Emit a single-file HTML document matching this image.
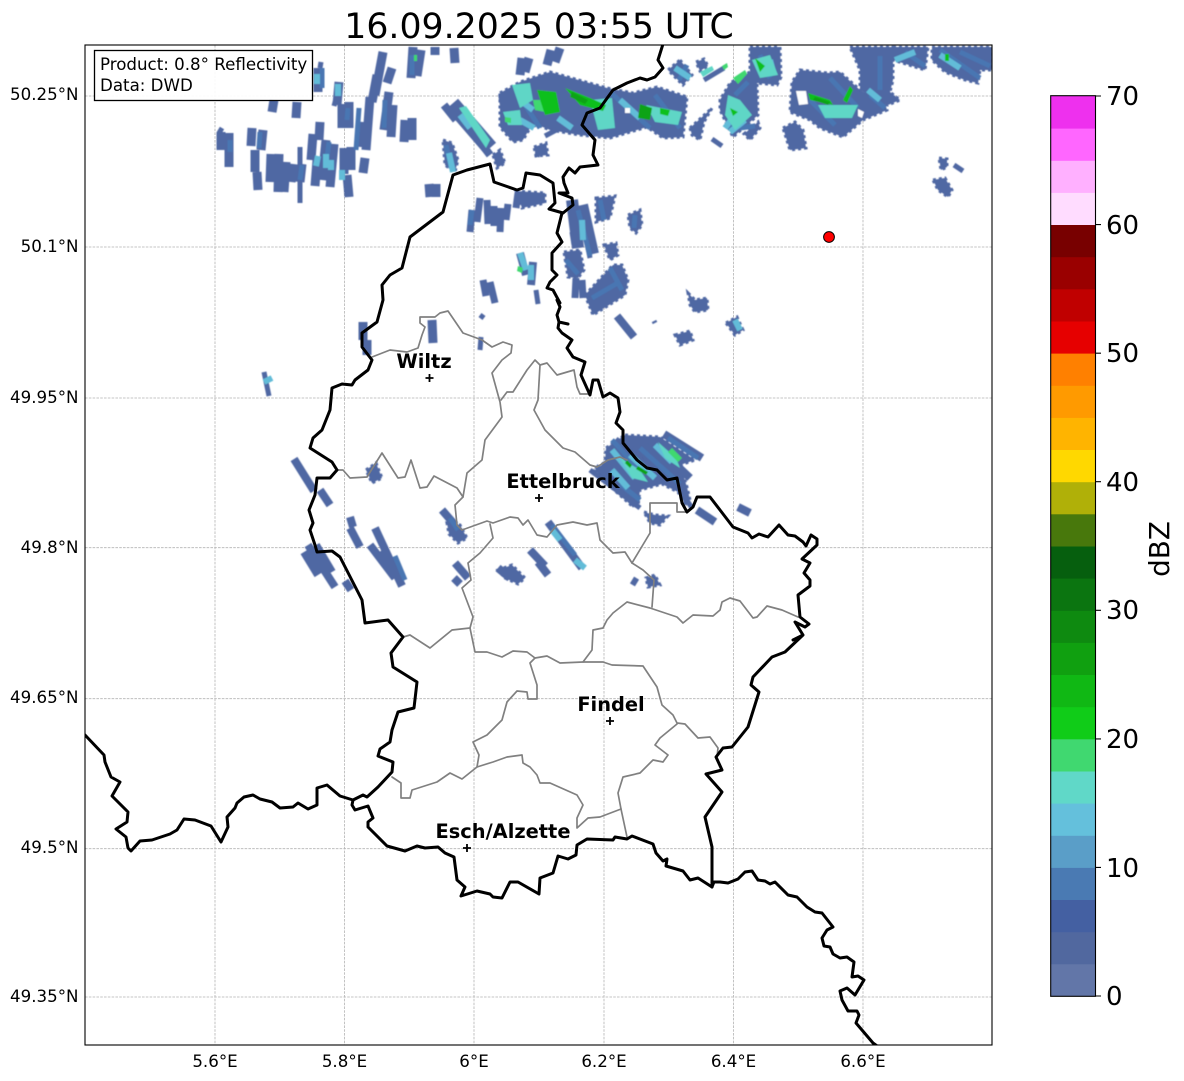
<!DOCTYPE html>
<html><head><meta charset="utf-8"><title>Radar</title>
<style>
html,body{margin:0;padding:0;background:#fff;width:1184px;height:1081px;overflow:hidden}
svg{display:block}
text{font-family:"DejaVu Sans","Liberation Sans",sans-serif;fill:#000}
.b{fill:#4f67a3;stroke:#4f67a3;stroke-width:3;stroke-dasharray:3 3}
.s{fill:none;stroke-linecap:butt}
.c{fill:none;stroke:#000;stroke-width:3;stroke-linejoin:round;stroke-linecap:round}
.g{fill:none;stroke:#808080;stroke-width:1.7;stroke-linejoin:round;stroke-linecap:round}
.t{font-size:16.67px}
.cb{font-size:26px}
.city{font-size:19.4px;font-weight:bold;text-anchor:middle}
</style></head><body>
<svg width="1184" height="1081" viewBox="0 0 1184 1081" xmlns="http://www.w3.org/2000/svg">
<defs><clipPath id="ax"><rect x="85" y="45" width="907" height="1000"/></clipPath>
<filter id="soft" x="-2%" y="-2%" width="104%" height="104%"><feGaussianBlur stdDeviation="0.55"/></filter></defs>
<text x="539" y="38" font-size="34.7" text-anchor="middle">16.09.2025 03:55 UTC</text>

<!-- grid -->
<g stroke="#b4b4b4" stroke-width=".8" stroke-dasharray="2.6 1.2" fill="none">
<path d="M215 45V1045M344.5 45V1045M474 45V1045M604 45V1045M733.5 45V1045M863 45V1045"/>
<path d="M85 96H992M85 247H992M85 398H992M85 547.7H992M85 698.7H992M85 848.7H992M85 997H992"/>
</g>

<g clip-path="url(#ax)">
<g filter="url(#soft)">
<!-- radar: base polygons -->
<g class="b">
<polygon points="500,93 520,82 550,72 607,88 633,93 657,87 687,97 683,137 663,138 647,127 610,138 580,135 550,130 533,123 523,140 513,142 500,127"/>
<polygon points="680,60 692,75 683,85 668,70"/>
<polygon points="696,62 704,59 708,66 700,71"/>
<polygon points="750,47 780,47 781,77 777,85 757,83 758,115 733,137 720,110 720,100 730,83 750,72"/>
<polygon points="690,128 712,108 704,122 700,140 692,135"/>
<polygon points="744,134 758,122 760,128 750,140"/>
<polygon points="800,70 828,73 840,72 860,90 885,103 887,110 863,120 843,137 820,128 810,120 790,112 792,82"/>
<polygon points="783,128 795,122 803,130 806,148 790,150"/>
<polygon points="850,47 893,47 893,80 890,92 900,100 888,105 860,90 860,70"/>
<polygon points="893,47 928,47 925,70 893,60"/>
<polygon points="932,47 992,47 992,70 980,70 978,83 965,80 945,72 932,60"/>
<polygon points="939,158 947,159 947,167 941,170"/>
<polygon points="933,180 945,178 952,190 948,197 938,190"/>
<polygon points="585,295 613,265 622,265 628,280 625,295 593,315"/>
<polygon points="564,252 580,250 584,270 578,278 568,277"/>
<polygon points="596,198 615,196 610,218 596,222"/>
<polygon points="628,215 640,210 642,225 636,233 630,228"/>
<polygon points="604,245 616,243 618,255 610,260"/>
<polygon points="688,293 695,300 707,298 708,310 695,312 690,305"/>
<polygon points="675,335 690,331 693,340 680,345"/>
<polygon points="726,323 737,317 743,330 735,335"/>
<polygon points="516,191 545,193 545,203 522,208"/>
<polygon points="498,570 512,565 525,578 518,584 505,578"/>
<polygon points="646,578 655,575 660,585 648,587"/>
<polygon points="644,512 655,515 668,516 660,525 650,523"/>
<polygon points="366,470 376,463 382,478 372,483"/>
<polygon points="443,140 452,143 458,160 455,172 445,165"/>
<polygon points="493,155 500,150 505,163 497,168"/>
<polygon points="534,147 546,143 548,155 536,156"/>
<polygon points="447,523 460,525 467,538 458,543 449,534"/>
<polygon points="625,435 660,437 695,460 680,465 687,487 690,500 686,506 678,492 662,484 640,490 638,506 632,506 612,488 595,470 605,462 606,448"/>
</g>
<!-- radar: strips -->
<g class="s" stroke="#4f67a3">
<path stroke-width="9" d="M221 132L221 150M229 133L229 153M229 150L229 167M252 128L251 146M263 130L261 150M255 150L255 172M257 172L258 190M271 154L270 182M279 154L278 192M286 162L284 192M293 164L291 182M302 164L300 182M313 134L311 160M320 122L319 140M317 160L315 186M326 140L322 180M334 144L330 187M344 148L344 174M347 175L349 197M351 147L351 170M365 158L363 173M363 122L361 147M370 97L366 150M377 75L372 102M383 52L375 95M392 68L387 83M389 92L384 130M393 105L391 137M405 120L404 142M412 118L412 140M413 47L411 78M421 50L417 76M435 47L435 55M454 48L455 63M342 104L342 128M349 102L349 128M318 68L318 92M339 82L337 105M274 100L272 112M297 102L296 118M432 320L433 343M429 184L430 197M436 184L436 197M363 322L363 340M367 340L367 355M522 58L520 75M529 58L525 72M551 50L547 65M560 48L555 62"/>
<path stroke-width="5" d="M300 147L300 203M222 128L219 133M321 62L320 68M340 84L334 106M264 372L269 396M536 290L538 304M481 337L480 350M574 202L577 212M572 232L574 245M588 248L590 258M538 150L537 157"/>
<path stroke-width="7" d="M472 210L470 232M480 198L477 222M487 200L488 224M494 206L494 226M501 208L500 232M508 204L506 220M518 193L516 208M483 280L486 296M490 282L495 303M576 278L575 298M582 280L583 298"/>
<path stroke-width="16" d="M452 104L490 148"/>
<path stroke-width="12" d="M504 94L510 128M524 88L530 128M515 110L512 136M582 205L593 254M572 200L578 248"/>
<path stroke-width="8" d="M462 118L490 155M444 105L456 120M520 253L526 275M533 262L531 285M617 316L634 337M294 459L314 491M320 490L330 505M350 528L360 547M350 517L353 527M375 528L402 586M370 545L395 578M382 550L400 572M308 545L335 587M316 545L332 572M304 552L318 575M345 581L351 590M442 510L455 525M455 563L468 578M454 578L460 584M530 550L545 566M538 562L548 575M548 522L582 568M632 580L637 583M498 568L510 578M697 510L715 522M738 507L750 513M610 448L632 480M603 468L636 505M615 440L650 470M635 445L675 482M650 440L690 478M664 434L702 458"/>
<path stroke-width="5" d="M712 139L722 146M704 80L724 68M575 120L545 136M654 321L655 323M680 490L692 508M596 466L612 480M590 470L640 508M954 165L963 171M480 315L484 318"/>
</g>
<!-- radar: mid blue -->
<g class="s" stroke="#4a76b2" stroke-width="5">
<path d="M230 140L230 152M260 132L259 148M329 142L326 166M359 108L356 150M385 100L384 128M412 55L412 75M348 108L347 120M322 68L322 88M302 165L300 180M578 210L590 256M600 200L604 220M635 215L634 228M610 268L622 290M592 298L616 284M566 260L578 274M470 225L472 210M446 145L451 168M522 100L540 128M610 92L650 128M655 95L680 128M760 55L770 78M735 95L748 82M745 115L730 130M880 56L880 90M905 52L925 66M940 50L980 78M960 52L990 66M830 78L858 108M810 100L835 125M870 95L885 108M687 65L679 80M740 128L755 126M612 440L640 470M640 448L680 484M668 438L698 458M620 484L640 500M552 525L575 555M450 518L458 530M395 556L405 580"/>
</g>
<!-- radar: cyan -->
<g class="s" stroke="#62bcd8" stroke-width="6">
<path d="M318 156L316 166M326 154L326 168M331 160L331 170M338 84L338 96M317 74L317 84M342 170L342 180M449 153L453 172M520 253L526 270M531 265L531 280M582 220L583 240M520 100L533 110M520 120L534 128M558 118L572 128M620 100L640 118M690 78L675 68M770 60L774 75M745 120L730 132M725 128L740 108M895 60L915 52M940 55L960 68M880 100L868 90M735 320L740 330M612 450L635 478M630 455L655 478M655 445L672 462M612 470L628 488M575 560L585 568M552 530L560 540M272 378L264 382M460 115L470 128"/>
</g>
<!-- radar: teal -->
<g fill="#5fd6c6" stroke="none">
<polygon points="512,85 530,83 533,100 520,108"/>
<polygon points="503,112 520,110 522,125 508,125"/>
<polygon points="590,100 612,98 615,128 598,130"/>
<polygon points="646,105 682,112 678,125 655,122"/>
<polygon points="818,105 858,105 852,118 825,118"/>
<polygon points="752,60 770,55 778,75 760,78"/>
<polygon points="728,95 740,100 752,115 735,130 725,115"/>
<polygon points="459,108 466,106 490,140 486,148"/>
<polygon points="700,72 712,66 714,70 703,77"/>
<polygon points="620,458 640,470 648,482 632,478"/>
<polygon points="658,442 676,458 680,468 665,458"/>
</g>
<!-- radar: green -->
<g fill="#3fd870">
<polygon points="505,117 511,118 511,123 505,122"/>
<polygon points="533,100 548,100 545,112 535,110"/>
<polygon points="733,78 745,70 747,74 738,84"/>
<polygon points="518,266 523,268 522,273 517,271"/>
<polygon points="672,448 682,458 678,462 668,452"/>
<polygon points="414,55 417,55 417,61 414,61"/>
<polygon points="722,66 727,63 728,67 724,70"/>
</g>
<g fill="#10c01a">
<polygon points="537,90 556,92 560,112 545,115"/>
<polygon points="565,88 590,98 606,105 603,111 580,105"/>
<polygon points="660,108 670,110 668,116 660,114"/>
<polygon points="808,93 830,100 833,105 810,100"/>
<polygon points="850,86 853,90 847,103 843,100"/>
<polygon points="755,58 765,66 760,72"/>
<polygon points="730,108 738,112 733,116"/>
<polygon points="945,54 949,54 949,61 945,61"/>
</g>
<g fill="#0da314">
<polygon points="640,104 652,108 650,120 638,118"/>
<polygon points="572,92 588,100 585,104 570,97"/>
<polygon points="815,97 830,102 828,105 813,100"/>
<polygon points="627,460 632,465 630,468 625,463"/>
<polygon points="638,466 648,472 646,475 636,469"/>
</g>
<polygon points="796,91 806,91 808,104 799,105" fill="#fff"/>
<polygon points="858,109 864,112 862,118 858,116" fill="#fff"/>
<polygon points="625,108 630,108 630,113 625,113" fill="#fff"/>
</g>

<!-- gray regional lines -->
<g class="g">
<path d="M337 470L343 470L350 478L367 477L382 453L398 478L405 477L411 460L420 488L427 487L434 476L457 488L463 497L455 505L457 525L462 530L487 521L493 523L510 517L518 518L523 525L528 520L537 535L547 537L557 525L573 522L587 525L597 523L600 540L613 553L625 552L632 563L643 570L654 580L652 607"/>
<path d="M632 563L650 533L650 503L677 503L677 512L686 512"/>
<path d="M463 497L467 473L482 460L485 440L502 417L500 402L492 373L502 360L511 353L512 345L503 342L492 347L482 340L463 333L448 311L440 313L435 317L427 317L420 317L420 323L425 327L422 335L418 348L407 352L390 350L372 357"/>
<path d="M501 400L507 392L513 392L527 370L535 360L540 365L538 400L534 410L545 430L563 448L575 452L590 465L597 467L608 460L620 457L627 460"/>
<path d="M540 365L547 363L557 375L574 370L577 387L580 394L588 394"/>
<path d="M490 524L493 538L480 553L468 563L471 580L462 588L473 617L470 628L452 630L430 648L410 635L403 637"/>
<path d="M470 628L475 652L487 652L502 657L513 651L527 652L535 658L547 656L560 663L583 662L603 662L612 665L643 666L657 687L662 705L673 715L677 723L685 724L698 738L710 737L718 748L717 757"/>
<path d="M583 662L592 650L593 630L603 628L607 620L613 613L627 602L650 608L677 617L683 623L693 615L713 616L720 610L722 602L730 598L740 601L753 618L757 617L767 606L782 610L798 617"/>
<path d="M535 658L530 663L537 685L537 699L528 699L527 692L517 691L507 702L502 720L487 735L473 742L479 755L477 767L493 762L507 757L522 755L523 763L530 767L537 775L540 783L550 783L577 795L583 805L577 818L577 828L588 818L600 817L621 809L618 793L623 777L640 773L653 760L663 762L668 755L655 745L660 738L677 724"/>
<path d="M621 809L627 837"/>
<path d="M477 767L462 779L450 773L437 782L412 790L410 798L401 798L401 783L392 777"/>
</g>

<!-- black country borders -->
<g class="c">
<path d="M85 735L104 755L105 762L111 777L120 782L112 796L128 812L127 822L116 829L126 837L128 848L131 851L140 841L152 840L170 834L177 830L184 819L195 820L211 826L221 842L228 827L227 817L235 808L237 803L244 797L253 795L260 799L272 802L280 808L293 807L298 803L308 809L317 805L317 788L327 785L340 796L353 800L352 805L355 810L368 806L373 818L368 822L368 827L387 846L405 851L417 846L425 848L438 847L445 853L454 857L457 880L465 887L461 896L477 891L490 894L493 897L502 898L510 882L518 882L539 894L540 878L553 873L558 856L568 859L576 855L577 845L587 839L613 840L615 837L627 839L632 836L653 844L656 853L663 861L667 859L666 866L683 871L690 880L698 878L712 887L714 882L720 882L728 883L738 879L745 872L752 871L758 880L765 881L770 884L775 882L788 895L797 897L807 907L815 912L822 913L833 927L827 930L822 938L824 946L830 947L833 954L840 958L847 957L854 962L852 977L858 976L864 980L855 995L847 988L840 991L842 1000L848 1011L857 1011L859 1015L856 1023L873 1043L880 1048"/>
<path d="M712 887L712 847L705 817L722 792L706 774L722 770L716 757L723 748L732 747L748 727L759 692L751 685L753 677L772 657L785 652L803 635L793 640L803 635L795 622L805 627L809 624L800 617L798 595L810 586L810 580L804 573L810 563L802 559L817 545L817 539L811 535L806 546L803 542L795 536L788 535L779 525L768 537L759 534L752 538L748 533L733 527L720 510L710 497L697 497L693 507L687 512L682 503L677 478L667 480L657 470L647 468L637 460L623 443L623 430L616 423L620 412L618 398L610 393L603 397L598 380L593 380L590 395L581 375L585 362L573 357L567 348L572 340L562 333L558 328L559 322L568 324L559 322L557 315L560 307L557 300L560 303L553 290L547 288L550 282L557 275L552 270L552 253L562 242L557 233L562 213L563 213"/>
<path d="M353 800L363 795L367 797L378 787L392 772L393 762L378 756L380 749L390 742L392 730L398 712L414 708L417 682L393 667L391 653L403 637L388 620L365 623L362 600L340 557L332 551L317 552L315 545L310 530L313 523L309 510L315 495L317 478L330 478L337 470L332 462L310 448L313 438L322 430L330 410L332 388L342 384L352 385L355 380L368 370L372 360L362 347L362 333L377 322L383 300L382 285L390 275L402 268L410 237L443 212L453 175L467 170L490 164L494 182L517 190L523 188L526 173L540 175L553 183L555 203L549 209L563 213L573 205L572 198L559 193L568 193L564 183L563 177L569 168L575 173L580 167L598 165L593 155L595 140L582 125L587 113L600 108L613 90L627 83L640 78L647 80L655 77L663 68L658 60L663 44"/>
</g>
</g>

<!-- info box -->
<rect x="94.5" y="50.5" width="218" height="50" fill="#fff" fill-opacity=".92" stroke="#000" stroke-width="1.3"/>
<text class="t" x="100" y="70">Product: 0.8° Reflectivity</text>
<text class="t" x="100" y="91">Data: DWD</text>

<!-- radar site -->
<circle cx="829" cy="237" r="5.4" fill="#f00" stroke="#000" stroke-width="1"/>

<!-- cities -->
<g stroke="#000" stroke-width="1.8" fill="none">
<path d="M425.5 378H433.5M429.5 374V382"/>
<path d="M535 498H543M539 494V502"/>
<path d="M606 721H614M610 717V725"/>
<path d="M463 848H471M467 844V852"/>
</g>
<text class="city" x="424" y="368">Wiltz</text>
<text class="city" x="563" y="488">Ettelbruck</text>
<text class="city" x="611" y="711">Findel</text>
<text class="city" x="503" y="838">Esch/Alzette</text>

<!-- frame -->
<rect x="85" y="45" width="907" height="1000" fill="none" stroke="#000" stroke-width="1.1"/>

<!-- axis labels -->
<g class="t" text-anchor="end">
<text x="78.5" y="100">50.25°N</text>
<text x="78.5" y="252">50.1°N</text>
<text x="78.5" y="403">49.95°N</text>
<text x="78.5" y="553">49.8°N</text>
<text x="78.5" y="703">49.65°N</text>
<text x="78.5" y="853">49.5°N</text>
<text x="78.5" y="1002">49.35°N</text>
</g>
<g class="t" text-anchor="middle">
<text x="215" y="1067">5.6°E</text>
<text x="344.5" y="1067">5.8°E</text>
<text x="474" y="1067">6°E</text>
<text x="604" y="1067">6.2°E</text>
<text x="733.5" y="1067">6.4°E</text>
<text x="863" y="1067">6.6°E</text>
</g>

<!-- colorbar -->
<g>
<rect x="1051" y="963.9" width="44.5" height="32.6" fill="#6276a8"/>
<rect x="1051" y="931.7" width="44.5" height="32.6" fill="#51689f"/>
<rect x="1051" y="899.6" width="44.5" height="32.6" fill="#4460a2"/>
<rect x="1051" y="867.4" width="44.5" height="32.6" fill="#4a7ab3"/>
<rect x="1051" y="835.3" width="44.5" height="32.6" fill="#5a9ec8"/>
<rect x="1051" y="803.2" width="44.5" height="32.6" fill="#64c0dc"/>
<rect x="1051" y="771" width="44.5" height="32.6" fill="#60d8c8"/>
<rect x="1051" y="738.9" width="44.5" height="32.6" fill="#40d870"/>
<rect x="1051" y="706.7" width="44.5" height="32.6" fill="#10cc18"/>
<rect x="1051" y="674.6" width="44.5" height="32.6" fill="#10b814"/>
<rect x="1051" y="642.4" width="44.5" height="32.6" fill="#10a010"/>
<rect x="1051" y="610.3" width="44.5" height="32.6" fill="#0e8a10"/>
<rect x="1051" y="578.2" width="44.5" height="32.6" fill="#0b7510"/>
<rect x="1051" y="546" width="44.5" height="32.6" fill="#065f0e"/>
<rect x="1051" y="513.9" width="44.5" height="32.6" fill="#48780c"/>
<rect x="1051" y="481.7" width="44.5" height="32.6" fill="#b0b008"/>
<rect x="1051" y="449.6" width="44.5" height="32.6" fill="#ffd800"/>
<rect x="1051" y="417.4" width="44.5" height="32.6" fill="#ffb400"/>
<rect x="1051" y="385.3" width="44.5" height="32.6" fill="#ff9a00"/>
<rect x="1051" y="353.2" width="44.5" height="32.6" fill="#ff8000"/>
<rect x="1051" y="321" width="44.5" height="32.6" fill="#e60000"/>
<rect x="1051" y="288.9" width="44.5" height="32.6" fill="#c00000"/>
<rect x="1051" y="256.7" width="44.5" height="32.6" fill="#9a0000"/>
<rect x="1051" y="224.6" width="44.5" height="32.6" fill="#780000"/>
<rect x="1051" y="192.4" width="44.5" height="32.6" fill="#ffdcff"/>
<rect x="1051" y="160.3" width="44.5" height="32.6" fill="#ffb0ff"/>
<rect x="1051" y="128.2" width="44.5" height="32.6" fill="#ff66ff"/>
<rect x="1051" y="96" width="44.5" height="32.6" fill="#ee30ee"/>
</g>
<rect x="1050.7" y="95.7" width="44.8" height="900.6" fill="none" stroke="#000" stroke-width="1.1"/>
<path d="M1095.5 96H1101M1095.5 224.6H1101M1095.5 353.2H1101M1095.5 481.7H1101M1095.5 610.3H1101M1095.5 738.9H1101M1095.5 867.4H1101M1095.5 996H1101" stroke="#000" stroke-width="1.1"/>
<g class="cb">
<text x="1106" y="105">70</text>
<text x="1106" y="234">60</text>
<text x="1106" y="362">50</text>
<text x="1106" y="491">40</text>
<text x="1106" y="619">30</text>
<text x="1106" y="748">20</text>
<text x="1106" y="877">10</text>
<text x="1106" y="1005">0</text>
</g>
<text transform="translate(1169 549) rotate(-90)" font-size="27.8" text-anchor="middle">dBZ</text>
</svg>
</body></html>
